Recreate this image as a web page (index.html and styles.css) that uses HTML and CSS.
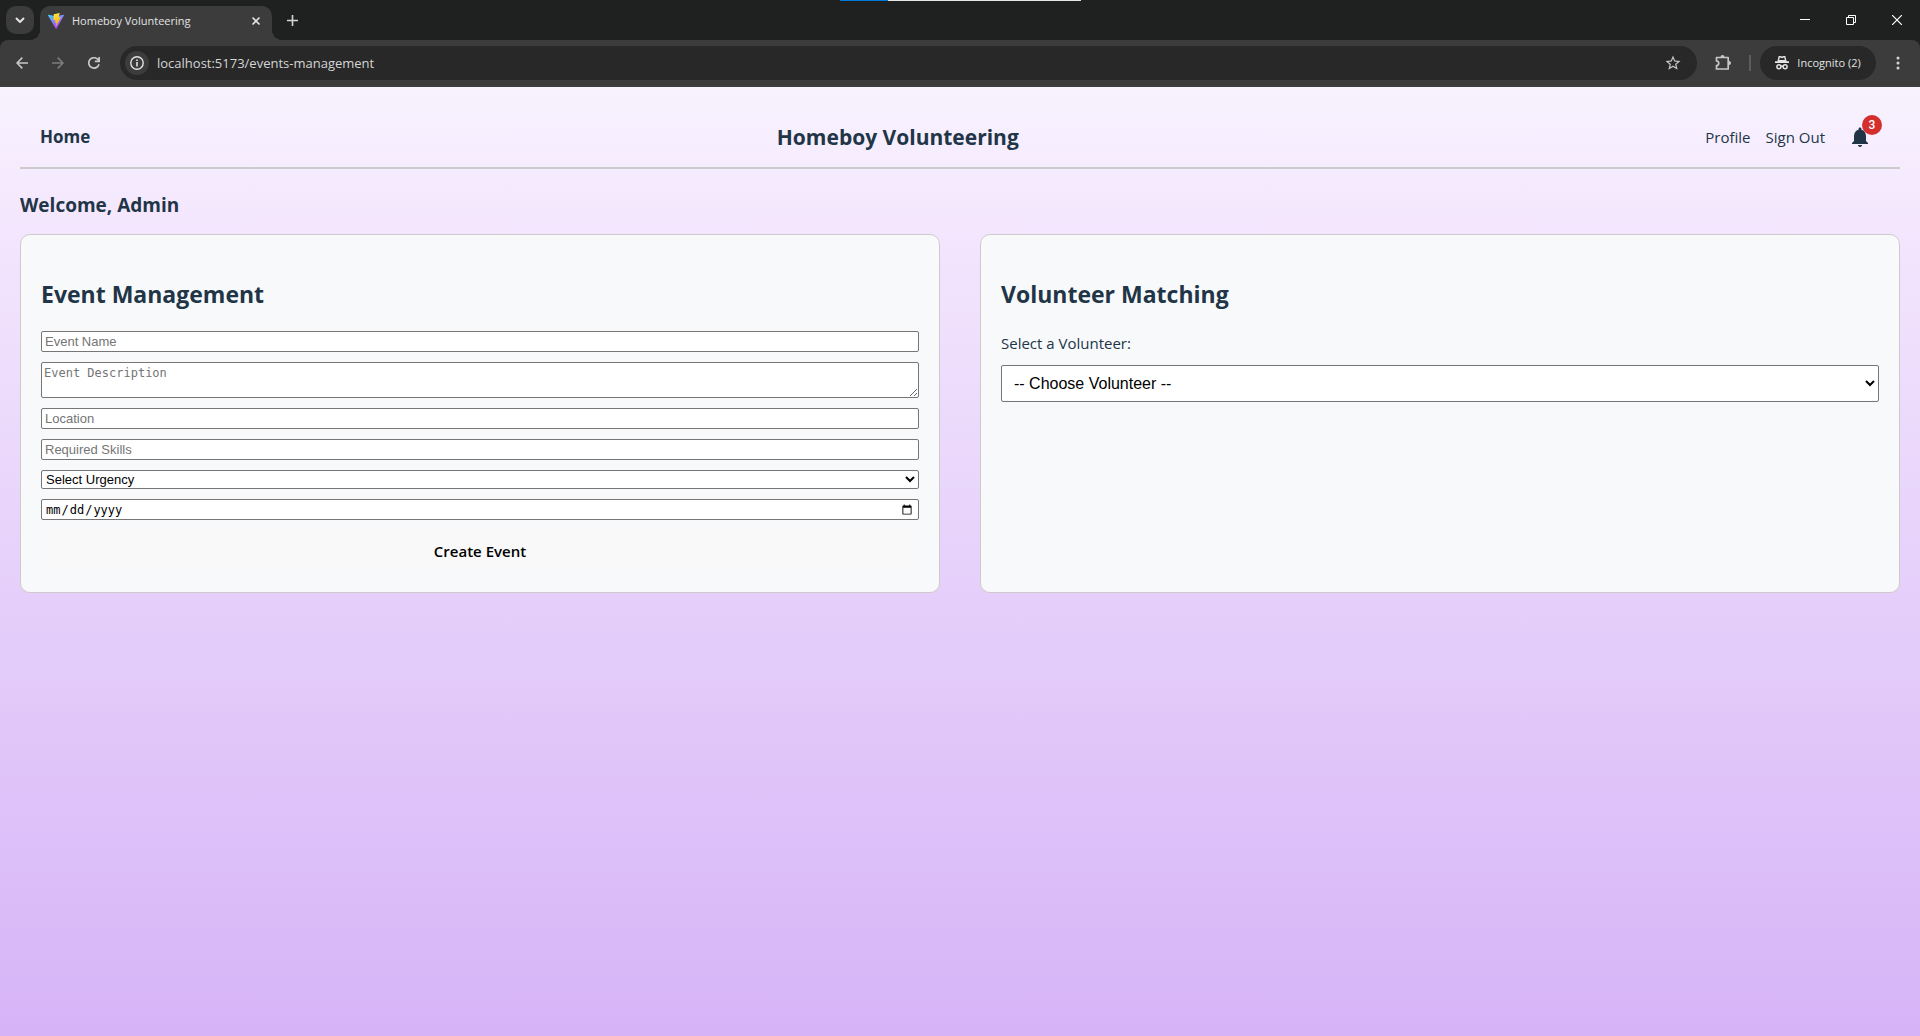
FILE: index.html
```html
<!DOCTYPE html>
<html lang="en">
<head>
<meta charset="utf-8">
<meta name="viewport" content="width=device-width, initial-scale=1">
<title>Homeboy Volunteering</title>
<link rel="stylesheet" href="styles.css">
</head>
<body>
<div class="browser">
  <div class="tabstrip">
    <span class="load-bar"></span>
    <button class="tab-search" aria-label="Search tabs"><svg width="10" height="6" viewBox="0 0 10 6"><path d="M1 1l4 4 4-4" fill="none" stroke="#e3e3e3" stroke-width="2"/></svg></button>
    <div class="tab">
      <svg width="16" height="16" viewBox="0 0 32 32">
        <defs>
          <linearGradient id="shield" x1="0" y1="0" x2=".6" y2="1"><stop offset="0" stop-color="#41d1ff"/><stop offset="1" stop-color="#bd34fe"/></linearGradient>
          <linearGradient id="bolt" x1=".4" y1="0" x2=".6" y2="1"><stop offset="0" stop-color="#ffea83"/><stop offset=".1" stop-color="#ffdd35"/><stop offset="1" stop-color="#ffa800"/></linearGradient>
        </defs>
        <path fill="url(#shield)" d="M31.9 4.8L17 31.4c-.3.6-1.100.6-1.400 0L.1 4.800c-.3-.6.2-1.300.9-1.200l15 2.700 15-2.700c.7-.1 1.200.6.9 1.200z"/>
        <path fill="url(#bolt)" d="M22.900.1L11.900 2.300l-.4.5-.7 11.400c0 .3.300.5.500.5l3.100-.7c.3-.1.500.2.500.500l-.9 4.500c-.1.300.200.500.500.4l1.900-.6c.3-.1.600.2.500.500l-1.400 7c-.1.4.5.7.8.300l9.300-18c.1-.3-.1-.6-.5-.6l-3.300.7c-.3.1-.5-.2-.5-.5l2.100-7.500c.1-.3-.2-.6-.5-.6z"/>
      </svg>
      <span class="tab-title">Homeboy Volunteering</span>
      <button class="icon-btn" aria-label="Close tab"><svg width="10" height="10" viewBox="0 0 10 10"><path d="M1.500 1.500l7 7M8.500 1.500l-7 7" stroke="#e3e3e3" stroke-width="1.600"/></svg></button>
    </div>
    <button class="icon-btn new-tab" aria-label="New tab"><svg width="11" height="11" viewBox="0 0 11 11"><path d="M5.500 0v11M0 5.500h11" stroke="#d5d5d5" stroke-width="1.600"/></svg></button>
    <div class="window-controls">
      <button class="icon-btn" aria-label="Minimize"><svg width="10" height="10" viewBox="0 0 10 10"><path d="M0 4.500h10" stroke="#fff"/></svg></button>
      <button class="icon-btn" aria-label="Restore"><svg width="10" height="10" viewBox="0 0 10 10" fill="none" stroke="#fff"><path d="M.5 2.500h7v7h-7zM2.500 2.500v-2h7v7h-2"/></svg></button>
      <button class="icon-btn" aria-label="Close window"><svg width="10" height="10" viewBox="0 0 10 10"><path d="M0 0l10 10M10 0L0 10" stroke="#fff" stroke-width="1.200"/></svg></button>
    </div>
  </div>
  <div class="toolbar">
    <button class="icon-btn" aria-label="Back"><svg width="12" height="12" viewBox="0 0 12 12" fill="none" stroke="#c7c7c7" stroke-width="1.600"><path d="M12 6H1M6.300.6L1 6l5.300 5.400"/></svg></button>
    <button class="icon-btn" aria-label="Forward" disabled><svg width="12" height="12" viewBox="0 0 12 12" fill="none" stroke="#7c7c7c" stroke-width="1.600"><path d="M0 6h11M5.700.6L11 6l-5.300 5.400"/></svg></button>
    <button class="icon-btn" aria-label="Reload"><svg width="12" height="12" viewBox="0 0 12 12" fill="none" stroke="#c7c7c7" stroke-width="1.700"><path d="M11 7.200A5.200 5.200 0 1 1 9.800 2.400L11 3.800M11.200 0v4.400H6.800"/></svg></button>
    <div class="omnibox">
      <button class="site-info" aria-label="Site information"><svg width="14" height="14" viewBox="0 0 14 14" fill="none" stroke="#e3e3e3"><circle cx="7" cy="7" r="6.200" stroke-width="1.400"/><path d="M7 6v4.400M7 3.400v1.500" stroke-width="1.600"/></svg></button>
      <input class="url" aria-label="Address" value="localhost:5173/events-management">
      <button class="icon-btn" aria-label="Bookmark"><svg width="18" height="18" viewBox="0 0 24 24"><path fill="#c7c7c7" d="M22 9.240l-7.190-.62L12 2 9.190 8.630 2 9.240l5.460 4.730L5.820 21 12 17.270 18.180 21l-1.630-7.030L22 9.240zM12 15.400l-3.760 2.270 1-4.280-3.320-2.880 4.380-.38L12 6.100l1.710 4.040 4.380.38-3.320 2.880 1 4.280L12 15.400z"/></svg></button>
    </div>
    <button class="icon-btn extensions" aria-label="Extensions"><svg width="17" height="17" viewBox="0 0 17 17"><path d="M1.500 3.500H13.200V15H1.500V11.500A2.200 2.200 0 0 0 1.500 7z" fill="none" stroke="#c7c7c7" stroke-width="1.700" stroke-linejoin="round"/><path d="M5.500 3a2 2 0 0 1 4 0zM14 7a2 2 0 0 1 0 4z" fill="#c7c7c7"/></svg></button>
    <span class="divider"></span>
    <button class="incognito"><svg width="14" height="14" viewBox="0 0 14 14"><path d="M3 5.800L4.200.8h1.300L7 1.400 8.500.8h1.300l1.200 5z" fill="none" stroke="#e3e3e3" stroke-width="1.400"/><path d="M0 5.300h14v1.700H0zM3.500 4h7v2h-7z" fill="#e3e3e3"/><g fill="none" stroke="#e3e3e3" stroke-width="1.500"><circle cx="3.900" cy="10.800" r="2"/><circle cx="10.100" cy="10.800" r="2"/><path d="M5.800 10.300q1.200-.6 2.400 0"/></g></svg>Incognito (2)</button>
    <button class="icon-btn" aria-label="Menu"><svg width="4" height="14" viewBox="0 0 4 14" fill="#d5d5d5"><circle cx="2" cy="2" r="1.500"/><circle cx="2" cy="7" r="1.500"/><circle cx="2" cy="12" r="1.500"/></svg></button>
  </div>
</div>

<div class="page">
  <header class="header">
    <a class="home" href="#">Home</a>
    <h1 class="brand">Homeboy Volunteering</h1>
    <nav class="links">
      <a href="#">Profile</a>
      <a href="#">Sign Out</a>
      <button class="bell" aria-label="Notifications"><svg width="24" height="24" viewBox="0 0 24 24"><path fill="#213547" d="M12 22c1.100 0 2-.9 2-2h-4c0 1.100.9 2 2 2zm6-6v-5c0-3.070-1.630-5.640-4.500-6.320V4c0-.83-.67-1.500-1.500-1.500s-1.500.67-1.500 1.500v.68C7.640 5.360 6 7.920 6 11v5l-2 2v1h16v-1l-2-2z"/></svg><span class="badge">3</span></button>
    </nav>
  </header>
  <h2 class="welcome">Welcome, Admin</h2>
  <main class="cards">
    <section class="card">
      <h2 class="card-title">Event Management</h2>
      <form class="event-form">
        <input type="text" placeholder="Event Name" aria-label="Event Name">
        <textarea placeholder="Event Description" aria-label="Event Description"></textarea>
        <input type="text" placeholder="Location" aria-label="Location">
        <input type="text" placeholder="Required Skills" aria-label="Required Skills">
        <select aria-label="Urgency"><option>Select Urgency</option></select>
        <input type="date" aria-label="Event date">
        <button class="create" type="button">Create Event</button>
      </form>
    </section>
    <section class="card">
      <h2 class="card-title">Volunteer Matching</h2>
      <label class="field-label" for="volunteer">Select a Volunteer:</label>
      <select class="volunteer" id="volunteer"><option>-- Choose Volunteer --</option></select>
    </section>
  </main>
</div>
</body>
</html>
```

FILE: styles.css
```css
* { box-sizing: border-box; }

body {
  margin: 0;
  min-height: 100vh;
  display: flex;
  flex-direction: column;
  font-family: "Segoe UI", "Open Sans", sans-serif;
  font-size: 15px;
  line-height: 24px;
  color: #213547;
}

a { color: inherit; text-decoration: none; }

/* Browser window */
.browser {
  background: #1f2120;
  color: #e3e3e3;
  font-size: 11px;
}
.browser button {
  padding: 0;
  border: 0;
  font-family: inherit;
  color: inherit;
}
.browser .icon-btn {
  display: flex;
  align-items: center;
  justify-content: center;
  flex: none;
  width: 36px;
  height: 28px;
  background: none;
}
.tabstrip {
  position: relative;
  display: flex;
  align-items: center;
  height: 40px;
  padding-left: 6px;
}
.load-bar {
  position: absolute;
  top: 0;
  left: 840px;
  width: 241px;
  height: 1px;
  background: linear-gradient(90deg, #0078d7 20%, #e3e6e3 20%);
}
.tab-search {
  display: flex;
  align-items: center;
  justify-content: center;
  width: 28px;
  height: 28px;
  border-radius: 10px;
  background: #3c3c3c;
}
.tab {
  position: relative;
  display: flex;
  align-items: center;
  align-self: flex-end;
  width: 232px;
  height: 34px;
  margin-left: 6px;
  padding: 0 0 5px 8px;
  border-radius: 10px 10px 0 0;
  background: #3c3c3c;
}
.tab::before,
.tab::after {
  content: "";
  position: absolute;
  bottom: 0;
  width: 10px;
  height: 10px;
}
.tab::before { left: -10px; background: radial-gradient(circle at 0 0, transparent 10px, #3c3c3c 10px); }
.tab::after { right: -10px; background: radial-gradient(circle at 100% 0, transparent 10px, #3c3c3c 10px); }
.tab-title { flex: 1; margin-left: 8px; white-space: nowrap; }
.browser .tab .icon-btn { width: 32px; }
.new-tab { margin-left: 2px; }
.window-controls { display: flex; margin-left: auto; }
.browser .window-controls .icon-btn { width: 46px; height: 40px; }

.toolbar {
  display: flex;
  align-items: center;
  height: 47px;
  padding: 0 4px 2px;
  border-radius: 8px 8px 0 0;
  background: #3c3c3c;
}
.omnibox {
  display: flex;
  align-items: center;
  flex: 1;
  height: 34px;
  margin-left: 8px;
  padding: 0 6px 0 5px;
  border-radius: 17px;
  background: #282828;
}
.browser .site-info {
  display: flex;
  align-items: center;
  justify-content: center;
  width: 24px;
  height: 24px;
  border-radius: 50%;
  background: #3c3c3c;
}
.url {
  flex: 1;
  margin-left: 8px;
  padding: 0;
  border: 0;
  background: none;
  color: #d5d5d5;
  font-family: inherit;
  font-size: 13px;
}
.extensions { margin-left: 8px; }
.divider { width: 2px; height: 16px; margin: 0 9px 0 8px; background: #5c5c5c; }
.incognito {
  display: flex;
  align-items: center;
  justify-content: center;
  gap: 8px;
  width: 116px;
  height: 34px;
  margin-right: 4px;
  border-radius: 17px;
  background: #282828;
  font-size: 11px;
}

/* Page */
.page {
  flex: 1;
  padding: 20px;
  background: linear-gradient(#f8f3ff 0%, #f3e5fd 16%, #e5cffa 54%, #d6b3f7 100%);
}
.header {
  display: flex;
  align-items: center;
  justify-content: space-between;
  height: 62px;
  padding: 0 20px;
  border-bottom: 2px solid #ccc;
}
.home { font-size: 17px; font-weight: 700; }
.brand { margin: 0; font-size: 21px; line-height: 32px; }
.links { display: flex; align-items: center; gap: 15px; }
.bell {
  position: relative;
  display: flex;
  padding: 8px;
  border: 0;
  background: none;
}
.badge {
  position: absolute;
  top: -2px;
  right: -2px;
  width: 20px;
  height: 20px;
  border-radius: 50%;
  background: #d32f2f;
  color: #fff;
  font-family: Roboto, sans-serif;
  font-size: 12px;
  font-weight: 500;
  line-height: 20px;
}
.welcome { margin: 20px 0 13px; font-size: 19px; line-height: 32px; }
.cards { display: grid; grid-template-columns: 1fr 1fr; gap: 40px; }
.card {
  padding: 20px;
  border: 1px solid #ccc;
  border-radius: 10px;
  background: #f8f9fb;
}
.card-title { margin: 20px 0 18px; font-size: 23px; line-height: 38px; }
.event-form { display: flex; flex-direction: column; gap: 10px; }
.event-form input,
.event-form select,
.event-form textarea { margin: 0; font-size: 13px; border: 1px solid #767676; border-radius: 2px; background: #fff; }
.event-form input { height: 21px; padding: 1px 3px; }
.event-form input[type="text"],
.event-form select { font-family: "Liberation Sans", Arial, sans-serif; }
.event-form textarea,
.event-form input[type="date"] { font-family: "DejaVu Sans Mono", monospace; font-size: 12px; }
.event-form textarea { height: 36px; padding: 2px; line-height: 16px; }
.event-form select { height: 19px; }
.event-form ::placeholder { color: #757575; }
.create {
  height: 42px;
  border: 0;
  border-radius: 8px;
  background: #f9f9f9;
  color: #000;
  font-family: inherit;
  font-size: 15px;
  font-weight: 600;
}
.field-label { display: block; margin-bottom: 10px; }
.volunteer {
  width: 100%;
  height: 37px;
  padding: 8px;
  border: 1px solid #767676;
  border-radius: 2px;
  background: #fff;
  font-family: "Liberation Sans", Arial, sans-serif;
  font-size: 16px;
}
```
